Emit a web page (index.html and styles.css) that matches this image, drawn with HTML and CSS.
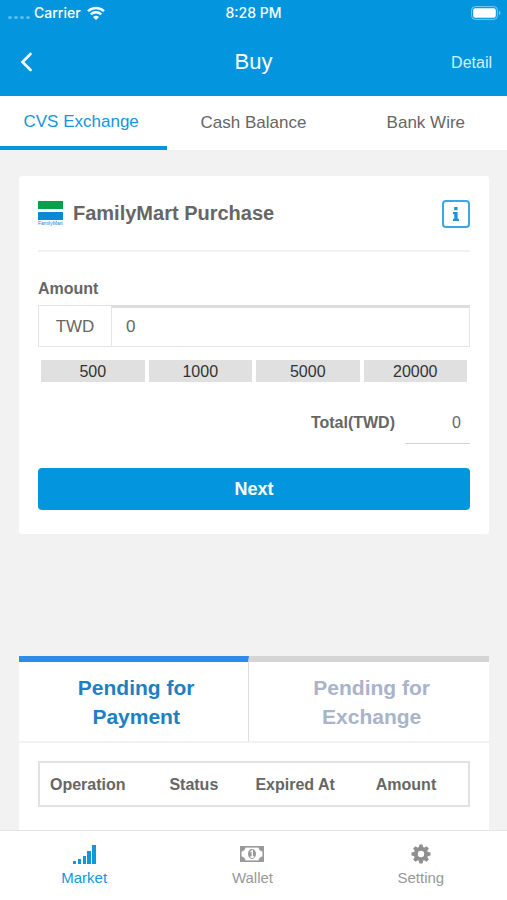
FILE: index.html
```html
<!DOCTYPE html>
<html lang="en">
<head>
<meta charset="utf-8">
<meta name="viewport" content="width=device-width, initial-scale=1">
<title>Buy</title>
<link rel="stylesheet" href="styles.css">
</head>
<body>
<header class="top">
  <div class="status">
    <div class="carrier">
      <span class="signal"><i></i><i></i><i></i><i></i></span>
      <span>Carrier</span>
      <svg class="wifi" viewBox="0 0 18 14" aria-hidden="true">
        <path d="M1 5.200a11.600 11.600 0 0 1 16 0M3.800 8.400a7.500 7.500 0 0 1 10.400 0" fill="none" stroke="#fff" stroke-width="2.400"/>
        <path d="M6 11a4.600 4.600 0 0 1 6 0L9 14z" fill="#fff"/>
      </svg>
    </div>
    <span class="time">8:28 PM</span>
    <svg class="battery" viewBox="0 0 30 14" aria-hidden="true">
      <rect x=".6" y=".6" width="25.800" height="12.800" rx="3.600" fill="none" stroke="#7fcaf0" stroke-width="1"/>
      <rect x="2.200" y="2.200" width="22.600" height="9.600" rx="2" fill="#fff"/>
      <path d="M28 4.800v4.400a2.400 2.400 0 0 0 0-4.400z" fill="#7fcaf0"/>
    </svg>
  </div>
  <div class="bar">
    <button class="back" type="button" aria-label="Back">
      <svg viewBox="0 0 12 20" aria-hidden="true"><path d="M10.500 2 2.500 10l8 8" fill="none" stroke="#fff" stroke-width="2.600" stroke-linecap="round"/></svg>
    </button>
    <h1>Buy</h1>
    <a class="detail" href="#detail">Detail</a>
  </div>
</header>

<nav class="tabs">
  <a class="active" href="#cvs">CVS Exchange</a>
  <a href="#cash">Cash Balance</a>
  <a href="#bank">Bank Wire</a>
</nav>

<main>
  <form class="card">
    <div class="card-head">
      <div class="logo">
        <span class="logo-green"></span>
        <span class="logo-blue"></span>
        <span class="logo-name">FamilyMart</span>
      </div>
      <h2>FamilyMart Purchase</h2>
      <button class="info" type="button" aria-label="Information">
        <svg viewBox="0 0 8 14" aria-hidden="true"><path d="M2.200 0h3.300v3.200H2.200zM1 5h4.600v6.800H7V14H1v-2.200h1.300V7.200H1z" fill="#1496dc"/></svg>
      </button>
    </div>
    <label class="label" for="amount">Amount</label>
    <div class="field">
      <span class="unit">TWD</span>
      <input id="amount" type="text" inputmode="numeric" value="0">
    </div>
    <div class="presets">
      <button type="button">500</button>
      <button type="button">1000</button>
      <button type="button">5000</button>
      <button type="button">20000</button>
    </div>
    <div class="total">
      <label for="total">Total(TWD)</label>
      <input id="total" type="text" value="0" readonly>
    </div>
    <button class="next" type="submit">Next</button>
  </form>

  <section class="orders">
    <div class="order-tabs">
      <button class="active" type="button">Pending for Payment</button>
      <button type="button">Pending for Exchange</button>
    </div>
    <div class="order-body">
      <table>
        <colgroup><col class="c-op"><col class="c-status"><col class="c-exp"><col></colgroup>
        <thead>
          <tr><th>Operation</th><th>Status</th><th>Expired At</th><th>Amount</th></tr>
        </thead>
      </table>
    </div>
  </section>
</main>

<nav class="bottom">
  <a class="active" href="#market">
    <svg class="ico" viewBox="0 0 24 20" aria-hidden="true"><path d="M1 17h3v3H1zM6 15h3v5H6zM11 12h3v8h-3zM15 7h4v13h-4zM20 1h4v19h-4z" fill="#1496dc"/></svg>
    Market
  </a>
  <a href="#wallet">
    <svg class="ico" viewBox="0 0 24 20" aria-hidden="true">
      <rect x=".8" y="2.800" width="22.400" height="14.400" fill="#fff" stroke="#999" stroke-width="1.600"/>
      <path d="M1 3h4.500A4.500 4.500 0 0 1 1 7.500zM23 3h-4.500A4.500 4.500 0 0 0 23 7.500zM1 17h4.500A4.500 4.500 0 0 0 1 12.500zM23 17h-4.500a4.500 4.500 0 0 1 4.500-4.500z" fill="#999"/>
      <ellipse cx="12" cy="10" rx="4" ry="5" fill="#999"/>
      <path d="M10.500 8 12.300 6.800V13M10.300 13h4" fill="none" stroke="#fff" stroke-width="1.300"/>
    </svg>
    Wallet
  </a>
  <a href="#setting">
    <svg class="ico" viewBox="-12 -10 24 20" aria-hidden="true">
      <circle r="5.200" fill="none" stroke="#8f8f8f" stroke-width="4"/>
      <g fill="#8f8f8f">
        <path id="tooth" d="M-2.200-6.500-1.600-9.500H1.600L2.200-6.500z"/>
        <use href="#tooth" transform="rotate(45)"/><use href="#tooth" transform="rotate(90)"/><use href="#tooth" transform="rotate(135)"/><use href="#tooth" transform="rotate(180)"/><use href="#tooth" transform="rotate(225)"/><use href="#tooth" transform="rotate(270)"/><use href="#tooth" transform="rotate(315)"/>
      </g>
    </svg>
    Setting
  </a>
</nav>
</body>
</html>
```
FILE: styles.css
```css
* { box-sizing: border-box; }

body {
  margin: 0;
  height: 100vh;
  display: flex;
  flex-direction: column;
  background: #f2f2f2;
  color: #666;
  font: 16px/20px "Liberation Sans", Arial, sans-serif;
}

a { color: inherit; text-decoration: none; }
button, input { font: inherit; color: inherit; border: 0; border-radius: 0; padding: 0; margin: 0; }
button { background: none; cursor: pointer; }
h1, h2 { margin: 0; }
svg { display: block; }

.top { flex: none; background: #0396df; color: #fff; }

.status {
  display: grid;
  grid-template-columns: 1fr auto 1fr;
  align-items: center;
  height: 26px;
  padding: 0 6px 0 8px;
  font: 500 14px/20px Inter, "Liberation Sans", sans-serif;
}
.carrier { display: flex; align-items: center; gap: 6px; }
.signal { display: flex; gap: 2px; padding-top: 8px; }
.signal i { width: 4px; height: 3px; border-radius: 50%; background: #5cbcec; }
.carrier > span + span { margin-left: -2px; }
.wifi { width: 18px; height: 14px; }
.time { margin-right: 2px; }
.battery { width: 30px; height: 14px; justify-self: end; }

.bar {
  display: grid;
  grid-template-columns: 1fr auto 1fr;
  align-items: center;
  height: 70px;
  padding: 2px 15px 0 20px;
}
.back { justify-self: start; }
.back svg { width: 12px; height: 20px; }
.bar h1 { margin-right: 5px; font-size: 22px; font-weight: 400; line-height: 28px; }
.detail { justify-self: end; padding-top: 2px; color: #d5f0fd; }

.tabs {
  flex: none;
  display: grid;
  grid-template-columns: 33% 34% 33%;
  height: 54px;
  background: #fff;
  font-size: 17px;
  text-align: center;
}
.tabs a { padding-top: 17px; }
.tabs a:last-child { padding-left: 5px; }
.tabs .active { padding: 16px 5px 0 0; color: #1496dc; border-bottom: 4px solid #0396df; }

main { flex: 1; min-height: 0; overflow: hidden; padding: 26px 18px 0 19px; }

.card { background: #fff; border-radius: 3px; padding: 16px 19px 24px; }
.card-head {
  display: flex;
  align-items: center;
  height: 60px;
  padding-bottom: 14px;
  border-bottom: 2px solid #f2f2f2;
}
.logo { width: 25px; margin-right: 10px; }
.logo span { display: block; }
.logo-green { height: 8px; margin-bottom: 3px; background: #0aa04a; }
.logo-blue { height: 8px; background: #0d88d6; }
.logo-name { font-size: 5px; line-height: 7px; color: #0d88d6; }
.card-head h2 { flex: 1; font-size: 20px; line-height: 24px; padding-bottom: 2px; }
.info {
  display: grid;
  place-items: center;
  width: 28px;
  height: 28px;
  border: 2px solid #3aa8e2;
  border-radius: 4px;
}
.info svg { width: 8px; height: 14px; }

.label { display: block; margin: 27px 0 6px; font-weight: 700; }
.field { display: flex; height: 42px; font-size: 17px; }
.unit {
  display: grid;
  place-items: center;
  width: 73px;
  padding-top: 1px;
  border: 1px solid #e4e4e4;
  border-right: 0;
}
.field input {
  flex: 1;
  min-width: 0;
  padding: 0 14px;
  border: 1px solid #e4e4e4;
  border-top: 3px solid #ddd;
}

.presets { display: grid; grid-template-columns: repeat(4, 1fr); gap: 4px; margin: 13px 3px 0; }
.presets button { height: 22px; padding-top: 2px; background: #e0e0e0; color: #333; }

.total { display: flex; justify-content: flex-end; gap: 10px; margin-top: 20px; height: 42px; line-height: 42px; }
.total label { font-weight: 700; }
.total input { width: 65px; padding-right: 9px; text-align: right; border-bottom: 1px solid #d4d4d4; }

.next {
  display: block;
  width: 100%;
  height: 42px;
  margin-top: 24px;
  border-radius: 4px;
  background: #0396df;
  color: #fff;
  font-size: 18px;
  font-weight: 700;
}

.orders { margin-top: 122px; }
.order-tabs { display: grid; grid-template-columns: 49fr 51fr; }
.order-tabs button {
  height: 85px;
  padding: 0 40px 0 45px;
  background: #fff;
  border-top: 6px solid #d5d5d5;
  color: #a9b3c9;
  font-size: 21px;
  line-height: 29px;
  font-weight: 700;
}
.order-tabs .active { border-top-color: #2b8ceb; border-right: 1px solid #ddd; color: #1d80c3; }
.order-body { height: 160px; margin-top: 2px; padding: 18px 19px; background: #fff; }
table { width: 100%; table-layout: fixed; border-collapse: collapse; border: 2px solid #e2e2e2; }
th { height: 44px; padding: 2px 0 0 10px; text-align: left; }
.c-op { width: 28%; }
.c-status { width: 20%; }
.c-exp { width: 28%; }

.bottom {
  flex: none;
  display: grid;
  grid-template-columns: repeat(3, 1fr);
  height: 70px;
  padding-right: 2px;
  background: #fff;
  border-top: 1px solid #e5e5e5;
  color: #999;
  font-size: 15px;
}
.bottom a { display: flex; flex-direction: column; align-items: center; gap: 4px; padding-top: 13px; }
.bottom .active { color: #1496dc; }
.ico { width: 24px; height: 20px; }
```
